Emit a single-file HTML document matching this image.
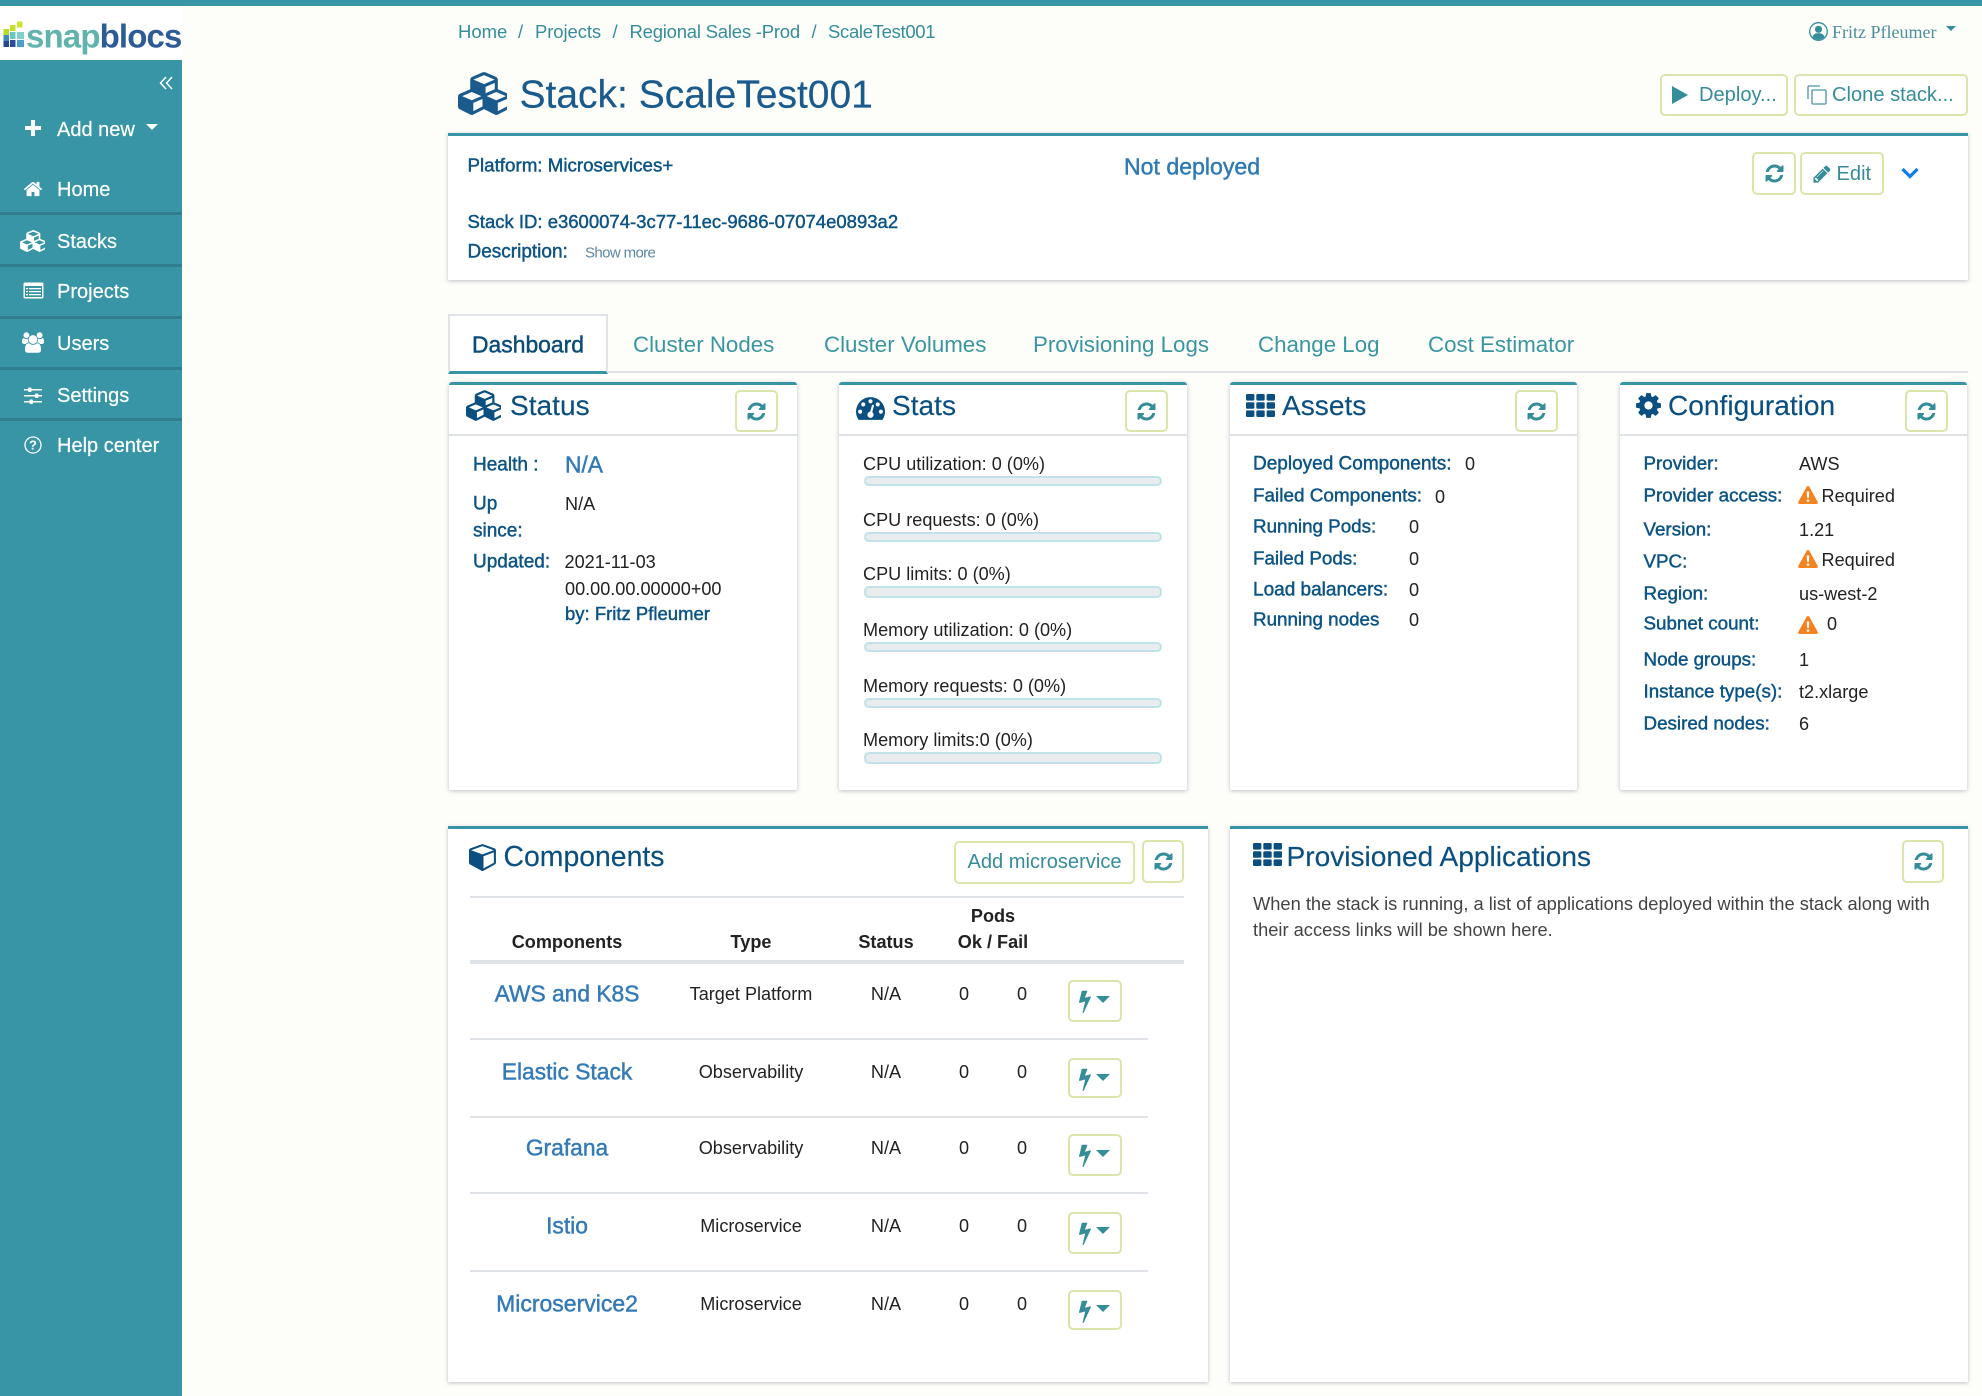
<!DOCTYPE html>
<html><head><meta charset="utf-8"><title>Stack: ScaleTest001</title>
<style>
html,body{margin:0;padding:0}
body{width:1982px;height:1396px;position:relative;overflow:hidden;background:#fdfefa;font-family:"Liberation Sans",Arial,sans-serif;font-size:18.1px;color:#222}
.t{position:absolute;white-space:nowrap;line-height:1;transform:translateY(calc(-50% + 1px))}
.c{transform:translate(-50%,-50%)}
.m{-webkit-text-stroke:.45px currentColor}
.l{color:#0c5484;font-size:19px}
.side{color:#fff;font-size:20px;-webkit-text-stroke:.2px #fff}
.tab{color:#3a95a2;font-size:22.3px}
.h{color:#0a4f80;font-size:28.1px;transform:translateY(-50%);-webkit-text-stroke:.15px currentColor}
.n{color:#337ab7;font-size:22.8px}
.b{font-weight:bold;color:#222}
.box{position:absolute;box-sizing:border-box}
.card{background:#fff;border-top:3px solid #3795a5;box-shadow:0 1px 4px rgba(90,100,110,.4);border-radius:3px 3px 2px 2px}
.btn{position:absolute;box-sizing:border-box;border:2px solid #d9e5aa;border-radius:5px;background:#fff;display:flex;align-items:center;justify-content:center;color:#358d99;font-size:20.1px}
.hr{position:absolute;background:#dfe3e7}
.bar{position:absolute;left:864px;width:298px;box-sizing:border-box;background:#e8ecee;border:2px solid #bfe3e9;border-radius:5px}
.nav{position:absolute;left:0;width:182px;height:3px;background:#2f7f8e}
svg{position:absolute;display:block}
.btn svg{position:static}
.ref{width:21px;height:21px;fill:#358d99}
.cr{font-size:18.500px;color:#358d99;transform:translateY(-50%)}
</style></head>
<body>
<svg width="0" height="0" style="position:absolute">
<defs>
<symbol id="cubes" viewBox="0 0 2048 1792"><path d="M640 1632l384-192v-314l-384 164v342zm-64-454l404-173-404-173-404 173zm1088 454l384-192v-314l-384 164v342zm-64-454l404-173-404-173-404 173zm-448-293l384-165v-266l-384 164v267zm-64-379l441-189-441-189-441 189zm1088 518v416q0 36-19 67t-52 47l-448 224q-25 14-57 14t-57-14l-448-224q-4-2-7-4-2 2-7 4l-448 224q-25 14-57 14t-57-14l-448-224q-33-16-52-47t-19-67v-416q0-38 21.5-70t56.5-48l434-186v-400q0-38 21.5-70t56.5-48l448-192q23-10 50-10t50 10l448 192q35 16 56.5 48t21.5 70v400l434 186q36 16 57 48t21 70z"/></symbol>
<symbol id="refresh" viewBox="0 0 1792 1792"><path d="M1639 1056q0 5-1 7-64 268-268 434.5t-478 166.5q-146 0-282.5-55t-243.5-157l-129 129q-19 19-45 19t-45-19-19-45v-448q0-26 19-45t45-19h448q26 0 45 19t19 45-19 45l-137 137q71 66 161 102t187 36q134 0 250-65t186-179q11-17 53-117 8-23 30-23h192q13 0 22.5 9.5t9.5 22.5zm25-800v448q0 26-19 45t-45 19h-448q-26 0-45-19t-19-45 19-45l138-138q-148-137-349-137-134 0-250 65t-186 179q-11 17-53 117-8 23-30 23h-199q-13 0-22.5-9.5t-9.5-22.5v-7q65-268 270-434.5t480-166.5q146 0 284 55.5t245 156.5l130-129q19-19 45-19t45 19 19 45z"/></symbol>
<symbol id="bolt" viewBox="0 0 1792 1792"><path d="M1333 566q18 20 7 44l-540 1157q-13 25-42 25-4 0-14-2-17-5-25.5-19t-4.5-30l197-808-406 101q-4 1-12 1-18 0-31-11-18-15-13-39l201-825q4-14 16-23t28-9h328q19 0 32 12.5t13 29.5q0 8-5 18l-171 463 396-98q8-2 12-2 19 0 34 15z"/></symbol>
<symbol id="cube" viewBox="0 0 1792 1792"><path d="M896 1629l640-349v-636l-640 233v752zm-64-865l698-254-698-254-698 254zm832-252v768q0 35-18 65t-49 47l-704 384q-28 16-61 16t-61-16l-704-384q-31-17-49-47t-18-65v-768q0-40 23-73t61-47l704-256q22-8 44-8t44 8l704 256q38 14 61 47t23 73z"/></symbol>
<symbol id="cog" viewBox="0 0 1792 1792"><path d="M1152 896q0-106-75-181t-181-75-181 75-75 181 75 181 181 75 181-75 75-181zm512-109v222q0 12-8 23t-20 13l-185 28q-19 54-39 91 35 50 107 138 10 12 10 25t-9 23q-27 37-99 108t-94 71q-12 0-26-9l-138-108q-44 23-91 38-16 136-29 186-7 28-36 28h-222q-14 0-24.5-8.5t-11.5-21.5l-28-184q-49-16-90-37l-141 107q-10 9-25 9-14 0-25-11-126-114-165-168-7-10-7-23 0-12 8-23 15-21 51-66.5t54-70.5q-27-50-41-99l-183-27q-13-2-21-12.5t-8-23.5v-222q0-12 8-23t19-13l186-28q14-46 39-92-40-57-107-138-10-12-10-24 0-10 9-23 26-36 98.5-107.5t94.5-71.5q13 0 26 10l138 107q44-23 91-38 16-136 29-186 7-28 36-28h222q14 0 24.5 8.5t11.5 21.5l28 184q49 16 90 37l142-107q9-9 24-9 13 0 25 10 129 119 165 170 7 8 7 22 0 12-8 23-15 21-51 66.5t-54 70.5q26 50 41 98l183 28q13 2 21 12.5t8 23.5z"/></symbol>
<symbol id="gauge" viewBox="0 0 1792 1792"><path d="M384 1152q0-53-37.5-90.5t-90.5-37.5-90.5 37.5-37.5 90.5 37.5 90.5 90.5 37.5 90.5-37.5 37.5-90.5zm192-448q0-53-37.5-90.5t-90.5-37.5-90.5 37.5-37.5 90.5 37.5 90.5 90.5 37.5 90.5-37.5 37.5-90.5zm428 481l101-382q6-26-7.5-48.5t-38.5-29.5-48 6.5-30 39.5l-101 382q-60 5-107 43.5t-63 98.5q-20 77 20 146t117 89 146-20 89-117q16-60-6-117t-72-91zm660-33q0-53-37.5-90.5t-90.5-37.5-90.5 37.5-37.5 90.5 37.5 90.5 90.5 37.5 90.5-37.5 37.5-90.5zm-640-640q0-53-37.5-90.5t-90.5-37.5-90.5 37.5-37.5 90.5 37.5 90.5 90.5 37.5 90.5-37.5 37.5-90.5zm448 192q0-53-37.5-90.5t-90.5-37.5-90.5 37.5-37.5 90.5 37.5 90.5 90.5 37.5 90.5-37.5 37.5-90.5zm320 448q0 261-141 483-19 29-54 29h-1402q-35 0-54-29-141-221-141-483 0-182 71-348t191-286 286-191 348-71 348 71 286 191 191 286 71 348z"/></symbol>
<symbol id="home" viewBox="0 0 1792 1792"><path d="M1472 992v480q0 26-19 45t-45 19h-384v-384h-256v384h-384q-26 0-45-19t-19-45v-480q0-1 .5-3t.5-3l575-474 575 474q1 2 1 6zm223-69l-62 74q-8 9-21 11h-3q-13 0-21-7l-692-577-692 577q-12 8-24 7-13-2-21-11l-62-74q-8-10-7-23.5t11-21.5l719-599q32-26 76-26t76 26l244 204v-195q0-14 9-23t23-9h192q14 0 23 9t9 23v408l219 182q10 8 11 21.5t-7 23.5z"/></symbol>
<symbol id="users" viewBox="0 0 1920 1792"><path d="M593 896q-162 5-265 128h-134q-82 0-138-40.5t-56-118.5q0-353 124-353 6 0 43.5 21t97.5 42.5 119 21.5q67 0 133-23-5 37-5 66 0 139 81 256zm1071 637q0 120-73 189.5t-194 69.5h-874q-121 0-194-69.5t-73-189.5q0-53 3.5-103.5t14-109 26.5-108.5 43-97.5 62-81 85.5-53.5 111.5-20q10 0 43 21.5t73 48 107 48 135 21.5 135-21.5 107-48 73-48 43-21.5q61 0 111.5 20t85.5 53.5 62 81 43 97.5 26.5 108.5 14 109 3.5 103.5zm-1024-1277q0 106-75 181t-181 75-181-75-75-181 75-181 181-75 181 75 75 181zm704 384q0 159-112.5 271.5t-271.5 112.5-271.5-112.5-112.5-271.5 112.5-271.5 271.5-112.5 271.5 112.5 112.5 271.5zm576 225q0 78-56 118.5t-138 40.5h-134q-103-123-265-128 81-117 81-256 0-29-5-66 66 23 133 23 59 0 119-21.5t97.5-42.5 43.5-21q124 0 124 353zm-128-609q0 106-75 181t-181 75-181-75-75-181 75-181 181-75 181 75 75 181z"/></symbol>
<symbol id="pencil" viewBox="0 0 1792 1792"><path d="M491 1536l91-91-235-235-91 91v107h128v128h107zm523-928q0-22-22-22-10 0-17 7l-542 542q-7 7-7 17 0 22 22 22 10 0 17-7l542-542q7-7 7-17zm-54-192l416 416-832 832h-416v-416zm683 96q0 53-37 90l-166 166-416-416 166-165q36-38 90-38 53 0 91 38l235 234q37 39 37 91z"/></symbol>
<symbol id="grid" viewBox="0 0 29 23"><g><rect x="0" y="0" width="8.4" height="6.6" rx="1.2"/><rect x="10.3" y="0" width="8.4" height="6.6" rx="1.2"/><rect x="20.6" y="0" width="8.4" height="6.6" rx="1.2"/><rect x="0" y="8.2" width="8.4" height="6.6" rx="1.2"/><rect x="10.3" y="8.2" width="8.4" height="6.6" rx="1.2"/><rect x="20.6" y="8.2" width="8.4" height="6.6" rx="1.2"/><rect x="0" y="16.4" width="8.4" height="6.6" rx="1.2"/><rect x="10.3" y="16.4" width="8.4" height="6.6" rx="1.2"/><rect x="20.6" y="16.4" width="8.4" height="6.6" rx="1.2"/></g></symbol>
<symbol id="warn" viewBox="0 0 20 18"><path fill-rule="evenodd" d="M10 0c.7 0 1.2.4 1.5 1l8.2 15c.5 1-.2 2-1.3 2H1.6C.5 18-.2 17 .3 16L8.5 1C8.800.4 9.300 0 10 0zM8.800 5.500l.3 6.500h1.800l.3-6.500zM8.800 13.500v2.300h2.400v-2.300z"/></symbol>
</defs>
</svg>

<!-- top bar / sidebar -->
<div class="box" style="left:0;top:0;width:1982px;height:6px;background:#3795a5"></div>
<div class="box" style="left:0;top:6px;width:182px;height:54px;background:#fff"></div>
<div class="box" style="left:0;top:60px;width:182px;height:1336px;background:#3795a5"></div>

<!-- logo -->
<svg style="left:3px;top:20px" width="22" height="28" viewBox="0 0 22 28">
<rect x="0.500" y="9" width="5.500" height="6" fill="#b5dc2a"/><rect x="7" y="5" width="5.500" height="6" fill="#c4e02c"/><rect x="14" y="1.500" width="5.500" height="6" fill="#cfe42f"/>
<rect x="0.500" y="15" width="5.500" height="6" fill="#3f89bd"/><rect x="7" y="12" width="5.500" height="7" fill="#6dc4c4"/><rect x="14" y="12" width="7" height="7" fill="#83d0d0"/>
<rect x="0.500" y="21" width="5.500" height="6" fill="#26478f"/><rect x="7" y="20" width="5.500" height="7" fill="#2b4c96"/><rect x="14" y="20" width="7" height="7" fill="#4f9dca"/></svg>
<div class="t" style="left:26px;top:35px;font-size:33px;font-weight:bold;letter-spacing:-.85px"><span style="color:#61b3ad">snap</span><span style="color:#2d5b95">blocs</span></div>

<svg style="left:159px;top:76px" width="14" height="14" viewBox="0 0 14 14" fill="none" stroke="#fff" stroke-width="1.500"><path d="M7 1L1.500 7 7 13M13 1L7.500 7 13 13"/></svg>

<svg style="left:25px;top:120px" width="16" height="16" viewBox="0 0 16 16" fill="#fff"><path d="M6 0h4v6h6v4h-6v6H6v-6H0V6h6z"/></svg>
<div class="t side" style="left:57px;top:129px">Add new</div>
<svg style="left:146px;top:124px" width="12" height="6" viewBox="0 0 12 6" fill="#fff"><path d="M0 0h12L6 6z"/></svg>

<svg style="left:23px;top:179px;fill:#fff" width="20" height="20"><use href="#home"/></svg>
<div class="t side" style="left:57px;top:189px">Home</div>
<div class="nav" style="top:212px"></div>
<svg style="left:20px;top:227px;fill:#fff" width="25" height="28"><use href="#cubes"/></svg>
<div class="t side" style="left:57px;top:241px">Stacks</div>
<div class="nav" style="top:264px"></div>
<svg style="left:23px;top:282px" width="21" height="17" viewBox="0 0 21 17"><rect x=".500" y=".500" width="20" height="16" rx="1.500" fill="#fff"/><path d="M2 4h17v11H2z" fill="#3795a5"/><path d="M3 6h2v1.200H3zM6 6h12v1.200H6zM3 9h2v1.200H3zM6 9h12v1.200H6zM3 12h2v1.200H3zM6 12h12v1.200H6z" fill="#fff"/></svg>
<div class="t side" style="left:57px;top:291px">Projects</div>
<div class="nav" style="top:316px"></div>
<svg style="left:22px;top:331px;fill:#fff" width="22" height="23"><use href="#users"/></svg>
<div class="t side" style="left:57px;top:343px">Users</div>
<div class="nav" style="top:367px"></div>
<svg style="left:24px;top:387px" width="18" height="17" viewBox="0 0 18 17" fill="#fff"><path d="M0 2h18v1.500H0zM0 8h18v1.500H0zM0 14h18v1.500H0z"/><rect x="4" y="0.500" width="3.500" height="4.500" rx="1"/><rect x="11" y="6.500" width="3.500" height="4.500" rx="1"/><rect x="5.500" y="12.500" width="3.500" height="4.500" rx="1"/></svg>
<div class="t side" style="left:57px;top:395px">Settings</div>
<div class="nav" style="top:418px"></div>
<svg style="left:24px;top:436px" width="18" height="18" viewBox="0 0 18 18"><circle cx="9" cy="9" r="8" fill="none" stroke="#fff" stroke-width="1.300"/><text x="9" y="13.500" text-anchor="middle" font-size="13" font-weight="bold" fill="#fff" font-family="Liberation Sans">?</text></svg>
<div class="t side" style="left:57px;top:445px">Help center</div>

<!-- breadcrumb -->
<div class="t cr" style="left:458px;top:32px">Home</div>
<div class="t cr" style="left:518px;top:32px">/</div>
<div class="t cr" style="left:535px;top:32px;letter-spacing:-.1px">Projects</div>
<div class="t cr" style="left:612.500px;top:32px">/</div>
<div class="t cr" style="left:629.500px;top:32px;letter-spacing:-.22px">Regional Sales -Prod</div>
<div class="t cr" style="left:811.500px;top:32px">/</div>
<div class="t cr" style="left:828px;top:32px;letter-spacing:-.32px">ScaleTest001</div>

<!-- user -->
<svg style="left:1809px;top:22px" width="19" height="19" viewBox="0 0 19 19"><circle cx="9.500" cy="9.500" r="8.800" fill="none" stroke="#358d99" stroke-width="1.300"/><circle cx="9.500" cy="7.300" r="3.600" fill="#358d99"/><path d="M3.500 15c.8-3 3-3.800 6-3.800s5.200.8 6 3.800c-1.500 1.600-3.600 2.600-6 2.600s-4.500-1-6-2.600z" fill="#358d99"/></svg>
<div class="t" style="left:1832px;top:31px;font-family:'Liberation Serif',serif;font-size:18px;color:#4b8f9b">Fritz Pfleumer</div>
<svg style="left:1946px;top:26px" width="10" height="5" viewBox="0 0 10 5" fill="#358d99"><path d="M0 0h10L5 5z"/></svg>

<!-- heading -->
<svg style="left:458px;top:72px;fill:#1a5a8c" width="49" height="43"><use href="#cubes"/></svg>
<div class="t" style="left:519.500px;top:94px;font-size:39px;color:#1a5a8c;-webkit-text-stroke:.2px currentColor">Stack: ScaleTest001</div>
<div class="btn" style="left:1660px;top:74px;width:128px;height:42px"></div>
<svg style="left:1672px;top:86px" width="16" height="18" viewBox="0 0 16 18" fill="#358d99"><path d="M0 0l16 9L0 18z"/></svg>
<div class="t" style="left:1699px;top:94px;font-size:20.100px;color:#358d99">Deploy...</div>
<div class="btn" style="left:1794px;top:74px;width:174px;height:42px"></div>
<svg style="left:1807px;top:85px" width="20" height="20" viewBox="0 0 20 20" fill="none" stroke="#4a96a3" stroke-width="1.300"><path d="M13 1H2a1 1 0 0 0-1 1v12"/><rect x="5" y="5" width="14" height="14" rx="1"/></svg>
<div class="t" style="left:1832px;top:94px;font-size:20.100px;color:#358d99">Clone stack...</div>

<!-- info card -->
<div class="box card" style="left:448px;top:133px;width:1520px;height:147px;border-radius:0"></div>
<div class="t m l" style="left:467.500px;top:165px;font-size:18.750px">Platform: Microservices+</div>
<div class="t m" style="left:1124px;top:165.500px;font-size:23.100px;color:#2f7ab5">Not deployed</div>
<div class="t m l" style="left:467.500px;top:221px;font-size:18.500px">Stack ID: e3600074-3c77-11ec-9686-07074e0893a2</div>
<div class="t m l" style="left:467.500px;top:250.500px;font-size:19px">Description:</div>
<div class="t" style="left:585px;top:252px;font-size:15px;color:#5b87a6;letter-spacing:-.62px">Show more</div>
<div class="btn" style="left:1752px;top:152px;width:44px;height:43px"><svg class="ref"><use href="#refresh"/></svg></div>
<div class="btn" style="left:1800px;top:152px;width:84px;height:43px"></div>
<svg style="left:1812px;top:164px;fill:#358d99" width="20" height="20"><use href="#pencil"/></svg>
<div class="t" style="left:1836.500px;top:173px;font-size:20.100px;color:#358d99">Edit</div>
<svg style="left:1901px;top:167px" width="18" height="12" viewBox="0 0 18 12" fill="none" stroke="#0a7cf0" stroke-width="3.200"><path d="M1.500 2l7.500 7.500L16.500 2"/></svg>

<!-- tabs -->
<div class="hr" style="left:607px;top:371px;width:1361px;height:2px"></div>
<div class="box" style="left:448px;top:314px;width:160px;height:60px;background:#fff;border:2px solid #e0e5ea;border-bottom:3px solid #3795a5"></div>
<div class="t m" style="left:472px;top:344px;font-size:22.900px;color:#0b4c78">Dashboard</div>
<div class="t tab" style="left:633px;top:344px">Cluster Nodes</div>
<div class="t tab" style="left:824px;top:344px">Cluster Volumes</div>
<div class="t tab" style="left:1033px;top:344px">Provisioning Logs</div>
<div class="t tab" style="left:1258px;top:344px">Change Log</div>
<div class="t tab" style="left:1428px;top:344px">Cost Estimator</div>

<!-- Status card -->
<div class="box card" style="left:449px;top:382px;width:348px;height:408px"></div>
<div class="hr" style="left:449px;top:434px;width:348px;height:2px"></div>
<svg style="left:466px;top:390px;fill:#0a4f80" width="35" height="31"><use href="#cubes"/></svg>
<div class="t h" style="left:510px;top:406px">Status</div>
<div class="btn" style="left:735px;top:390px;width:43px;height:42px"><svg class="ref"><use href="#refresh"/></svg></div>
<div class="t m l" style="left:473px;top:464px">Health :</div>
<div class="t m n" style="left:565px;top:464px">N/A</div>
<div class="t" style="left:565px;top:503px">N/A</div>
<div class="t m l" style="left:473px;top:503px">Up</div>
<div class="t m l" style="left:473px;top:530px">since:</div>
<div class="t m l" style="left:473px;top:561px">Updated:</div>
<div class="t" style="left:564.500px;top:561px">2021-11-03</div>
<div class="t" style="left:565px;top:588px">00.00.00.00000+00</div>
<div class="t m l" style="left:565px;top:613px;font-size:18.500px">by: Fritz Pfleumer</div>

<!-- Stats card -->
<div class="box card" style="left:839px;top:382px;width:348px;height:408px"></div>
<div class="hr" style="left:839px;top:434px;width:348px;height:2px"></div>
<svg style="left:856px;top:393px;fill:#0a4f80" width="29" height="29"><use href="#gauge"/></svg>
<div class="t h" style="left:892px;top:406px">Stats</div>
<div class="btn" style="left:1125px;top:390px;width:43px;height:42px"><svg class="ref"><use href="#refresh"/></svg></div>
<div class="t" style="left:863px;top:463px">CPU utilization: 0 (0%)</div>
<div class="bar" style="top:476px;height:10px"></div>
<div class="t" style="left:863px;top:519px">CPU requests: 0 (0%)</div>
<div class="bar" style="top:532px;height:10px"></div>
<div class="t" style="left:863px;top:573px">CPU limits: 0 (0%)</div>
<div class="bar" style="top:586px;height:12px"></div>
<div class="t" style="left:863px;top:629px">Memory utilization: 0 (0%)</div>
<div class="bar" style="top:642px;height:10px"></div>
<div class="t" style="left:863px;top:685px">Memory requests: 0 (0%)</div>
<div class="bar" style="top:698px;height:10px"></div>
<div class="t" style="left:863px;top:739px">Memory limits:0 (0%)</div>
<div class="bar" style="top:752px;height:12px"></div>

<!-- Assets card -->
<div class="box card" style="left:1230px;top:382px;width:347px;height:408px"></div>
<div class="hr" style="left:1230px;top:434px;width:347px;height:2px"></div>
<svg style="left:1246px;top:394px;fill:#0a4f80" width="29" height="23"><use href="#grid"/></svg>
<div class="t h" style="left:1282px;top:406px">Assets</div>
<div class="btn" style="left:1515px;top:390px;width:43px;height:42px"><svg class="ref"><use href="#refresh"/></svg></div>
<div class="t m l" style="left:1253px;top:463px">Deployed Components:</div><div class="t" style="left:1465px;top:463px">0</div>
<div class="t m l" style="left:1253px;top:496px;font-size:18.900px">Failed Components:</div><div class="t" style="left:1435px;top:496px">0</div>
<div class="t m l" style="left:1253px;top:526px;font-size:18.800px">Running Pods:</div><div class="t" style="left:1409px;top:526px">0</div>
<div class="t m l" style="left:1253px;top:558px;font-size:18.800px">Failed Pods:</div><div class="t" style="left:1409px;top:558px">0</div>
<div class="t m l" style="left:1253px;top:589px">Load balancers:</div><div class="t" style="left:1409px;top:589px">0</div>
<div class="t m l" style="left:1253px;top:619px;font-size:18.800px">Running nodes</div><div class="t" style="left:1409px;top:619px">0</div>

<!-- Configuration card -->
<div class="box card" style="left:1620px;top:382px;width:347px;height:408px"></div>
<div class="hr" style="left:1620px;top:434px;width:347px;height:2px"></div>
<svg style="left:1634px;top:391px;fill:#0a4f80" width="29" height="29"><use href="#cog"/></svg>
<div class="t h" style="left:1668px;top:406px">Configuration</div>
<div class="btn" style="left:1905px;top:390px;width:43px;height:42px"><svg class="ref"><use href="#refresh"/></svg></div>
<div class="t m l" style="left:1643.500px;top:463px;font-size:18.800px">Provider:</div><div class="t" style="left:1799px;top:463px">AWS</div>
<div class="t m l" style="left:1643.500px;top:495px;font-size:18.800px">Provider access:</div>
<svg style="left:1798px;top:486px;fill:#f58220" width="20" height="18"><use href="#warn"/></svg><div class="t" style="left:1821.500px;top:495px">Required</div>
<div class="t m l" style="left:1643.500px;top:529px;font-size:18.800px">Version:</div><div class="t" style="left:1799px;top:529px">1.21</div>
<div class="t m l" style="left:1643.500px;top:561px;font-size:18.800px">VPC:</div>
<svg style="left:1798px;top:550px;fill:#f58220" width="20" height="18"><use href="#warn"/></svg><div class="t" style="left:1821.500px;top:559px">Required</div>
<div class="t m l" style="left:1643.500px;top:593px;font-size:18.800px">Region:</div><div class="t" style="left:1799px;top:593px">us-west-2</div>
<div class="t m l" style="left:1643.500px;top:623px;font-size:18.800px">Subnet count:</div>
<svg style="left:1798px;top:616px;fill:#f58220" width="20" height="18"><use href="#warn"/></svg><div class="t" style="left:1827px;top:623px">0</div>
<div class="t m l" style="left:1643.500px;top:659px;font-size:18.800px">Node groups:</div><div class="t" style="left:1799px;top:659px">1</div>
<div class="t m l" style="left:1643.500px;top:691px;font-size:18.800px">Instance type(s):</div><div class="t" style="left:1799px;top:691px">t2.xlarge</div>
<div class="t m l" style="left:1643.500px;top:723px;font-size:18.800px">Desired nodes:</div><div class="t" style="left:1799px;top:723px">6</div>

<!-- Components card -->
<div class="box card" style="left:448px;top:826px;width:760px;height:556px;border-radius:0"></div>
<svg style="left:469px;top:842px;fill:#0a4f80" width="29" height="29"><use href="#cube"/></svg>
<div class="t h" style="left:503.500px;top:857px;font-size:28.400px">Components</div>
<div class="btn" style="left:954px;top:841px;width:181px;height:43px">Add microservice</div>
<div class="btn" style="left:1142px;top:840px;width:42px;height:43px"><svg class="ref"><use href="#refresh"/></svg></div>
<div class="hr" style="left:470px;top:896px;width:714px;height:2px"></div>
<div class="t c b" style="left:993px;top:915.500px">Pods</div>
<div class="t c b" style="left:567px;top:941.500px">Components</div>
<div class="t c b" style="left:751px;top:941.500px">Type</div>
<div class="t c b" style="left:886px;top:941.500px">Status</div>
<div class="t c b" style="left:993px;top:941.500px">Ok / Fail</div>
<div class="hr" style="left:470px;top:960px;width:714px;height:4px"></div>

<div class="t c m n" style="left:567px;top:994px">AWS and K8S</div>
<div class="t c" style="left:751px;top:994px">Target Platform</div>
<div class="t c" style="left:886px;top:994px">N/A</div><div class="t c" style="left:964px;top:994px">0</div><div class="t c" style="left:1022px;top:994px">0</div>
<div class="btn" style="left:1068px;top:980px;width:54px;height:42px"></div>
<svg style="left:1073px;top:989px;fill:#358d99" width="24" height="24"><use href="#bolt"/></svg>
<svg style="left:1096px;top:996px" width="14" height="7" viewBox="0 0 14 7" fill="#358d99"><path d="M0 0h14L7 7z"/></svg>
<div class="hr" style="left:470px;top:1038px;width:678px;height:2px"></div>

<div class="t c m n" style="left:567px;top:1071.500px">Elastic Stack</div>
<div class="t c" style="left:751px;top:1071.500px">Observability</div>
<div class="t c" style="left:886px;top:1071.500px">N/A</div><div class="t c" style="left:964px;top:1071.500px">0</div><div class="t c" style="left:1022px;top:1071.500px">0</div>
<div class="btn" style="left:1068px;top:1058px;width:54px;height:40px"></div>
<svg style="left:1073px;top:1067px;fill:#358d99" width="24" height="24"><use href="#bolt"/></svg>
<svg style="left:1096px;top:1074px" width="14" height="7" viewBox="0 0 14 7" fill="#358d99"><path d="M0 0h14L7 7z"/></svg>
<div class="hr" style="left:470px;top:1116px;width:678px;height:2px"></div>

<div class="t c m n" style="left:567px;top:1147.500px">Grafana</div>
<div class="t c" style="left:751px;top:1147.500px">Observability</div>
<div class="t c" style="left:886px;top:1147.500px">N/A</div><div class="t c" style="left:964px;top:1147.500px">0</div><div class="t c" style="left:1022px;top:1147.500px">0</div>
<div class="btn" style="left:1068px;top:1134px;width:54px;height:42px"></div>
<svg style="left:1073px;top:1143px;fill:#358d99" width="24" height="24"><use href="#bolt"/></svg>
<svg style="left:1096px;top:1150px" width="14" height="7" viewBox="0 0 14 7" fill="#358d99"><path d="M0 0h14L7 7z"/></svg>
<div class="hr" style="left:470px;top:1192px;width:678px;height:2px"></div>

<div class="t c m n" style="left:567px;top:1226px">Istio</div>
<div class="t c" style="left:751px;top:1226px">Microservice</div>
<div class="t c" style="left:886px;top:1226px">N/A</div><div class="t c" style="left:964px;top:1226px">0</div><div class="t c" style="left:1022px;top:1226px">0</div>
<div class="btn" style="left:1068px;top:1212px;width:54px;height:42px"></div>
<svg style="left:1073px;top:1221px;fill:#358d99" width="24" height="24"><use href="#bolt"/></svg>
<svg style="left:1096px;top:1227px" width="14" height="7" viewBox="0 0 14 7" fill="#358d99"><path d="M0 0h14L7 7z"/></svg>
<div class="hr" style="left:470px;top:1270px;width:678px;height:2px"></div>

<div class="t c m n" style="left:567px;top:1303.500px;font-size:23px">Microservice2</div>
<div class="t c" style="left:751px;top:1303.500px">Microservice</div>
<div class="t c" style="left:886px;top:1303.500px">N/A</div><div class="t c" style="left:964px;top:1303.500px">0</div><div class="t c" style="left:1022px;top:1303.500px">0</div>
<div class="btn" style="left:1068px;top:1290px;width:54px;height:40px"></div>
<svg style="left:1073px;top:1299px;fill:#358d99" width="24" height="24"><use href="#bolt"/></svg>
<svg style="left:1096px;top:1305px" width="14" height="7" viewBox="0 0 14 7" fill="#358d99"><path d="M0 0h14L7 7z"/></svg>

<!-- Provisioned card -->
<div class="box card" style="left:1230px;top:826px;width:738px;height:556px;border-radius:0"></div>
<svg style="left:1253px;top:843px;fill:#0a4f80" width="29" height="23"><use href="#grid"/></svg>
<div class="t h" style="left:1286.500px;top:857px">Provisioned Applications</div>
<div class="btn" style="left:1902px;top:840px;width:42px;height:43px"><svg class="ref"><use href="#refresh"/></svg></div>
<div class="t" style="left:1253px;top:903px;color:#444;font-size:18.300px">When the stack is running, a list of applications deployed within the stack along with</div>
<div class="t" style="left:1253px;top:929px;color:#444;font-size:18.300px">their access links will be shown here.</div>
</body></html>
